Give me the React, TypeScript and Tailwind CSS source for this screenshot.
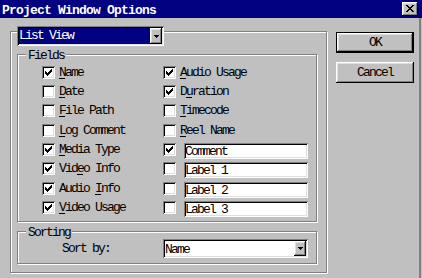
import React from "react";

const sunken =
  "shadow-[inset_1px_1px_0_#808080,inset_-1px_-1px_0_#ffffff,inset_2px_2px_0_#000000,inset_-2px_-2px_0_#dfdfdf]";
const raised =
  "shadow-[inset_-1px_-1px_0_#000000,inset_1px_1px_0_#ffffff,inset_-2px_-2px_0_#808080,inset_2px_2px_0_#dfdfdf]";
const etched = "border border-[#808080] shadow-[inset_1px_1px_0_#ffffff,1px_1px_0_#ffffff]";

const CHECK: [number, number][] = [
  [6, 0], [5, 1], [6, 1], [0, 2], [4, 2], [5, 2], [6, 2], [0, 3], [1, 3], [3, 3], [4, 3], [5, 3],
  [0, 4], [1, 4], [2, 4], [3, 4], [4, 4], [1, 5], [2, 5], [3, 5], [2, 6],
];

const XMARK: [number, number][] = [
  [0, 0], [1, 0], [6, 0], [7, 0],
  [1, 1], [2, 1], [5, 1], [6, 1],
  [2, 2], [3, 2], [4, 2], [5, 2],
  [3, 3], [4, 3],
  [2, 4], [3, 4], [4, 4], [5, 4],
  [1, 5], [2, 5], [5, 5], [6, 5],
  [0, 6], [1, 6], [6, 6], [7, 6],
];

function Pixels({ pts, w, h, ox = 0, oy = 0 }: { pts: [number, number][]; w: number; h: number; ox?: number; oy?: number }) {
  return (
    <svg width={w} height={h} shapeRendering="crispEdges" className="block">
      {pts.map(([x, y], i) => (
        <rect key={i} x={x + ox} y={y + oy} width={1} height={1} fill="#000" />
      ))}
    </svg>
  );
}

function CheckBox({ checked }: { checked: boolean }) {
  return (
    <div className={`relative w-[13px] h-[13px] shrink-0 bg-white ${sunken}`}>
      {checked && (
        <div className="absolute left-0 top-0">
          <Pixels pts={CHECK} w={13} h={13} ox={3} oy={3} />
        </div>
      )}
    </div>
  );
}

function Arrow() {
  return (
    <svg width={5} height={3} shapeRendering="crispEdges" className="block">
      <rect x={0} y={0} width={5} height={1} fill="#000" />
      <rect x={1} y={1} width={3} height={1} fill="#000" />
      <rect x={2} y={2} width={1} height={1} fill="#000" />
    </svg>
  );
}

function DropButton() {
  return (
    <div className={`w-[12px] h-full shrink-0 bg-[#c0c0c0] flex items-center justify-center ${raised}`}>
      <Arrow />
    </div>
  );
}

function Mnemonic({ text, u }: { text: string; u: number }) {
  return (
    <span className="whitespace-pre leading-[13px] ml-[4px]">
      {text.slice(0, u)}
      <span className="underline underline-offset-2 decoration-1">{text[u]}</span>
      {text.slice(u + 1)}
    </span>
  );
}

type Cell =
  | { kind: "label"; text: string; u: number; checked: boolean }
  | { kind: "input"; text: string; checked: boolean };

const LEFT: Cell[] = [
  { kind: "label", text: "Name", u: 0, checked: true },
  { kind: "label", text: "Date", u: 0, checked: false },
  { kind: "label", text: "File Path", u: 0, checked: false },
  { kind: "label", text: "Log Comment", u: 0, checked: false },
  { kind: "label", text: "Media Type", u: 0, checked: true },
  { kind: "label", text: "Video Info", u: 3, checked: true },
  { kind: "label", text: "Audio Info", u: 6, checked: true },
  { kind: "label", text: "Video Usage", u: 0, checked: true },
];

const RIGHT: Cell[] = [
  { kind: "label", text: "Audio Usage", u: 0, checked: true },
  { kind: "label", text: "Duration", u: 1, checked: true },
  { kind: "label", text: "Timecode", u: 0, checked: false },
  { kind: "label", text: "Reel Name", u: 0, checked: false },
  { kind: "input", text: "Comment", checked: true },
  { kind: "input", text: "Label 1", checked: false },
  { kind: "input", text: "Label 2", checked: false },
  { kind: "input", text: "Label 3", checked: false },
];

function FieldCell({ c }: { c: Cell }) {
  return (
    <div className="flex items-start">
      <CheckBox checked={c.checked} />
      {c.kind === "label" ? (
        <Mnemonic text={c.text} u={c.u} />
      ) : (
        <div className={`w-[124px] h-[16px] ml-[8px] bg-white pl-[1px] pt-[3px] overflow-hidden ${sunken}`}>
          <span className="block whitespace-pre leading-[12px]">{c.text}</span>
        </div>
      )}
    </div>
  );
}

export default function App() {
  return (
    <div className="w-[422px] h-[278px] bg-[#c0c0c0] overflow-hidden flex flex-col font-['Liberation_Mono',monospace] text-[13px] text-black tracking-[-1.8px]">
      {/* title bar */}
      <div className="h-[18px] shrink-0 bg-[#000080] flex items-center justify-between pl-[2px] pr-[4px]">
        <span className="self-end h-[15px] text-white font-bold text-[13px] leading-[15px] tracking-[-0.8px] whitespace-pre">
          Project Window Options
        </span>
        <div className={`w-[16px] h-[14px] bg-[#c0c0c0] pl-[4px] pt-[3px] ${raised}`}>
          <Pixels pts={XMARK} w={8} h={7} />
        </div>
      </div>

      {/* body */}
      <div className="flex-1 flex mr-[1px] border-r-2 border-[#808080]">
        <div className="pl-[10px] pt-[13px]">
          <div className={`relative w-[317px] h-[242px] flex flex-col items-start pt-[22px] px-[6px] gap-[9px] ${etched}`}>
            {/* view combo overlaying the frame */}
            <div className={`absolute left-[6px] top-[-6px] w-[147px] h-[20px] bg-white p-[2px] flex ${sunken}`}>
              <div className="w-[131px] h-full bg-[#000080] text-white leading-[16px] whitespace-pre">List View</div>
              <DropButton />
            </div>

            {/* Fields */}
            <div className={`relative w-[300px] h-[168px] shrink-0 ${etched}`}>
              <span className="absolute left-[8px] top-[-6px] px-[2px] bg-[#c0c0c0] leading-[13px]">Fields</span>
              <div className="grid grid-cols-[121px_1fr] grid-rows-[19px_19px_20px_19px_19px_20px_19px_19px] pt-[11px] pl-[24px]">
                {LEFT.map((l, i) => (
                  <React.Fragment key={i}>
                    <FieldCell c={l} />
                    <FieldCell c={RIGHT[i]} />
                  </React.Fragment>
                ))}
              </div>
            </div>

            {/* Sorting */}
            <div className={`relative w-[300px] h-[33px] shrink-0 flex items-start pt-[7px] pl-[44px] ${etched}`}>
              <span className="absolute left-[8px] top-[-6px] px-[2px] bg-[#c0c0c0] leading-[13px]">Sorting</span>
              <span className="w-[101px] leading-[19px] whitespace-pre">Sort by:</span>
              <div className={`w-[145px] h-[19px] bg-white p-[2px] flex ${sunken}`}>
                <span className="flex-1 leading-[15px] pt-[1px]">Name</span>
                <DropButton />
              </div>
            </div>
          </div>
        </div>

        {/* buttons */}
        <div className="ml-[9px] pt-[14px] flex flex-col gap-[9px]">
          <div className="w-[78px] h-[21px] border border-black">
            <div className={`w-full h-full flex items-center justify-center ${raised}`}>
              <span className="leading-[13px]">OK</span>
            </div>
          </div>
          <div className={`w-[78px] h-[21px] flex items-center justify-center ${raised}`}>
            <span className="leading-[13px]">Cancel</span>
          </div>
        </div>
      </div>
    </div>
  );
}
